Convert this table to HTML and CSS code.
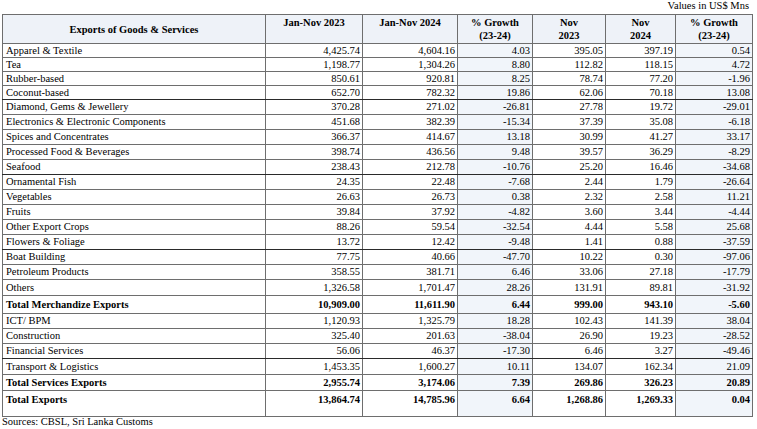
FILE: index.html
```html
<!DOCTYPE html>
<html>
<head>
<meta charset="utf-8">
<link rel="stylesheet" href="styles.css">
</head>
<body>
<div class="page">
  <div class="unit">Values in US$ Mns</div>
  <table class="exports">
    <colgroup>
      <col class="c-name"><col class="c-y23"><col class="c-y24"><col class="c-g1"><col class="c-n23"><col class="c-n24"><col class="c-g2">
    </colgroup>
    <thead>
      <tr>
        <th class="mid">Exports of Goods &amp; Services</th>
        <th class="top">Jan-Nov 2023</th>
        <th class="top">Jan-Nov 2024</th>
        <th class="top">% Growth<br>(23-24)</th>
        <th class="top">Nov<br>2023</th>
        <th class="top">Nov<br>2024</th>
        <th class="top">% Growth<br>(23-24)</th>
      </tr>
    </thead>
    <tbody>
      <tr class="h14"><td>Apparel &amp; Textile</td><td>4,425.74</td><td>4,604.16</td><td class="g">4.03</td><td>395.05</td><td>397.19</td><td class="g">0.54</td></tr>
      <tr class="h14"><td>Tea</td><td>1,198.77</td><td>1,304.26</td><td class="g">8.80</td><td>112.82</td><td>118.15</td><td class="g">4.72</td></tr>
      <tr class="h14"><td>Rubber-based</td><td>850.61</td><td>920.81</td><td class="g">8.25</td><td>78.74</td><td>77.20</td><td class="g">-1.96</td></tr>
      <tr class="h14 dark"><td>Coconut-based</td><td>652.70</td><td>782.32</td><td class="g">19.86</td><td>62.06</td><td>70.18</td><td class="g">13.08</td></tr>
      <tr class="h15"><td>Diamond, Gems &amp; Jewellery</td><td>370.28</td><td>271.02</td><td class="g">-26.81</td><td>27.78</td><td>19.72</td><td class="g">-29.01</td></tr>
      <tr class="h15"><td>Electronics &amp; Electronic Components</td><td>451.68</td><td>382.39</td><td class="g">-15.34</td><td>37.39</td><td>35.08</td><td class="g">-6.18</td></tr>
      <tr class="h15"><td>Spices and Concentrates</td><td>366.37</td><td>414.67</td><td class="g">13.18</td><td>30.99</td><td>41.27</td><td class="g">33.17</td></tr>
      <tr class="h15"><td>Processed Food &amp; Beverages</td><td>398.74</td><td>436.56</td><td class="g">9.48</td><td>39.57</td><td>36.29</td><td class="g">-8.29</td></tr>
      <tr class="h15 dark"><td>Seafood</td><td>238.43</td><td>212.78</td><td class="g">-10.76</td><td>25.20</td><td>16.46</td><td class="g">-34.68</td></tr>
      <tr class="h15"><td>Ornamental Fish</td><td>24.35</td><td>22.48</td><td class="g">-7.68</td><td>2.44</td><td>1.79</td><td class="g">-26.64</td></tr>
      <tr class="h15"><td>Vegetables</td><td>26.63</td><td>26.73</td><td class="g">0.38</td><td>2.32</td><td>2.58</td><td class="g">11.21</td></tr>
      <tr class="h15"><td>Fruits</td><td>39.84</td><td>37.92</td><td class="g">-4.82</td><td>3.60</td><td>3.44</td><td class="g">-4.44</td></tr>
      <tr class="h15"><td>Other Export Crops</td><td>88.26</td><td>59.54</td><td class="g">-32.54</td><td>4.44</td><td>5.58</td><td class="g">25.68</td></tr>
      <tr class="h15 dark"><td>Flowers &amp; Foliage</td><td>13.72</td><td>12.42</td><td class="g">-9.48</td><td>1.41</td><td>0.88</td><td class="g">-37.59</td></tr>
      <tr class="h15"><td>Boat Building</td><td>77.75</td><td>40.66</td><td class="g">-47.70</td><td>10.22</td><td>0.30</td><td class="g">-97.06</td></tr>
      <tr class="h15"><td>Petroleum Products</td><td>358.55</td><td>381.71</td><td class="g">6.46</td><td>33.06</td><td>27.18</td><td class="g">-17.79</td></tr>
      <tr class="h16"><td>Others</td><td>1,326.58</td><td>1,701.47</td><td class="g">28.26</td><td>131.91</td><td>89.81</td><td class="g">-31.92</td></tr>
      <tr class="h18 total"><td>Total Merchandize Exports</td><td>10,909.00</td><td>11,611.90</td><td class="g">6.44</td><td>999.00</td><td>943.10</td><td class="g">-5.60</td></tr>
      <tr class="h15"><td>ICT/ BPM</td><td>1,120.93</td><td>1,325.79</td><td class="g">18.28</td><td>102.43</td><td>141.39</td><td class="g">38.04</td></tr>
      <tr class="h15"><td>Construction</td><td>325.40</td><td>201.63</td><td class="g">-38.04</td><td>26.90</td><td>19.23</td><td class="g">-28.52</td></tr>
      <tr class="h15 dark"><td>Financial Services</td><td>56.06</td><td>46.37</td><td class="g">-17.30</td><td>6.46</td><td>3.27</td><td class="g">-49.46</td></tr>
      <tr class="h16"><td>Transport &amp; Logistics</td><td>1,453.35</td><td>1,600.27</td><td class="g">10.11</td><td>134.07</td><td>162.34</td><td class="g">21.09</td></tr>
      <tr class="h16 total"><td>Total Services Exports</td><td>2,955.74</td><td>3,174.06</td><td class="g">7.39</td><td>269.86</td><td>326.23</td><td class="g">20.89</td></tr>
      <tr class="h26 total last"><td>Total Exports</td><td>13,864.74</td><td>14,785.96</td><td class="g">6.64</td><td>1,268.86</td><td>1,269.33</td><td class="g">0.04</td></tr>
    </tbody>
  </table>
  <div class="sources">Sources: CBSL, Sri Lanka Customs</div>
</div>
</body>
</html>
```

FILE: styles.css
```css
html, body {
  margin: 0;
  padding: 0;
  background: #ffffff;
}

.page {
  padding: 0 5px 0 2px;
  font-family: "Liberation Serif", "Times New Roman", serif;
  font-size: 10.5px;
  color: #000000;
}

.unit {
  text-align: right;
  height: 14px;
  line-height: 12px;
  padding-right: 3px;
  font-size: 10.5px;
}

.exports {
  width: 750px;
  table-layout: fixed;
  border-collapse: collapse;
  border: 1px solid #4a4a4a;
}

.c-name { width: 263px; }
.c-y23 { width: 97px; }
.c-y24 { width: 95px; }
.c-g1 { width: 75px; }
.c-n23 { width: 73px; }
.c-n24 { width: 70px; }
.c-g2 { width: 77px; }

.exports th,
.exports td {
  border: 1px solid #6e6e6e;
  padding: 0 2px;
  line-height: 12px;
  white-space: nowrap;
  overflow: hidden;
}

.exports th {
  background: #eef2f8;
  font-weight: bold;
  font-size: 10.5px;
  text-align: center;
  height: 26px;
}

.exports th.top {
  vertical-align: top;
  padding-top: 1px;
  line-height: 13px;
}

.exports th.mid {
  vertical-align: middle;
  padding-top: 2px;
}

.exports td {
  text-align: right;
  vertical-align: middle;
}

.exports td:first-child {
  text-align: left;
  padding-left: 3px;
}

.exports td.g {
  background: #f1f5fa;
}

.exports tr.dark td {
  border-bottom-color: #2a2a2a;
}

.exports tr.total td {
  font-weight: bold;
}

.exports tr.last td {
  padding-bottom: 7px;
}

.h14 { height: 14px; }
.h15 { height: 15px; }
.h16 { height: 16px; }
.h18 { height: 18px; }
.h26 { height: 26px; }

.sources {
  padding-top: 0;
  font-size: 10.5px;
  line-height: 10px;
}
```
